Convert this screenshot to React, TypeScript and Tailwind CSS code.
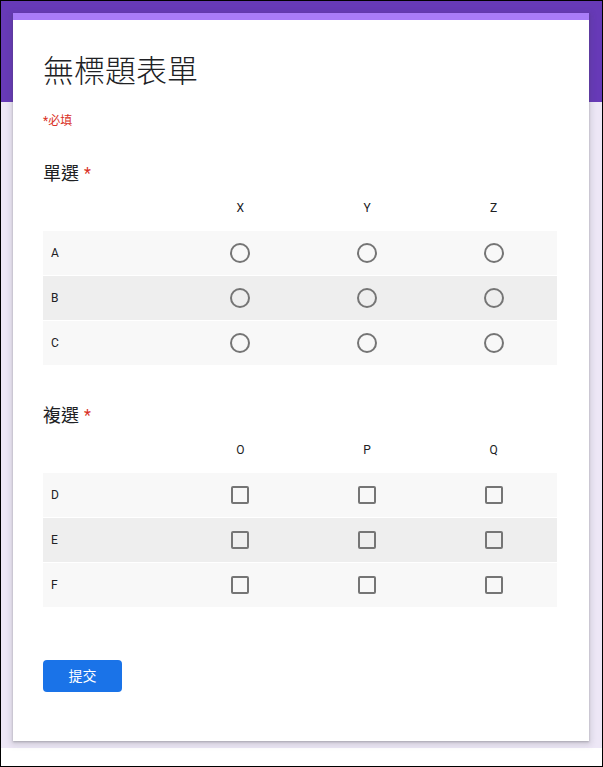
import React from 'react';

const FONT = { fontFamily: 'Roboto, "Noto Sans CJK TC", "Noto Sans", sans-serif' };

interface GridQuestion {
  title: string;
  kind: 'radio' | 'checkbox';
  columns: string[];
  rows: string[];
}

const questions: GridQuestion[] = [
  { title: '單選', kind: 'radio', columns: ['X', 'Y', 'Z'], rows: ['A', 'B', 'C'] },
  { title: '複選', kind: 'checkbox', columns: ['O', 'P', 'Q'], rows: ['D', 'E', 'F'] },
];

function Control({ kind }: { kind: GridQuestion['kind'] }) {
  if (kind === 'radio') {
    return <span className="block w-[20px] h-[20px] rounded-full border-2 border-[#757575]" />;
  }
  return <span className="block w-[18px] h-[18px] rounded-[2px] border-2 border-[#757575]" />;
}

function GridBlock({ q }: { q: GridQuestion }) {
  return (
    <div>
      <div className="h-[24px] leading-[24px] text-[18px] text-[#202124]">
        {q.title}
        <span className="text-[#d93025] text-[16px] align-top ml-[5px]">*</span>
      </div>
      <div className="flex flex-col gap-px">
        <div className="grid grid-cols-[134px_repeat(3,1fr)] h-[44px] items-center text-[12px] text-[#202124]">
          <span />
          {q.columns.map((c) => (
            <span key={c} className="text-center">{c}</span>
          ))}
        </div>
        {q.rows.map((r, i) => (
          <div
            key={r}
            className={`grid grid-cols-[134px_repeat(3,1fr)] h-[44px] items-center ${i === 1 ? 'bg-[#eeeeee]' : 'bg-[#f8f8f8]'}`}
          >
            <span className="pl-[8px] text-[12px] text-[#202124]">{r}</span>
            {q.columns.map((c) => (
              <span key={c} className="flex justify-center">
                <Control kind={q.kind} />
              </span>
            ))}
          </div>
        ))}
      </div>
    </div>
  );
}

export default function App() {
  return (
    <div style={FONT} className="h-[767px] border border-black bg-white overflow-hidden">
      <div className="bg-[linear-gradient(to_bottom,#673ab7_101px,#ede7f6_101px)] pt-[12px] pb-[7px] pl-[12px]">
        <div className="w-[576px] bg-white shadow-[0_1px_2px_rgba(60,64,67,0.3),0_2px_6px_2px_rgba(60,64,67,0.15)]">
          <div className="h-[7px] bg-[#a97cf8]" />
          <div className="pl-[30px] pr-[32px] pt-[33px] pb-[49px]">
            <h1 className="text-[31px] leading-[37px] font-light text-[#202124]">無標題表單</h1>
            <p className="mt-[23px] text-[12px] leading-[16px] text-[#d93025]">*必填</p>
            <div className="mt-[33px] flex flex-col gap-[39px]">
              {questions.map((q) => (
                <GridBlock key={q.title} q={q} />
              ))}
            </div>
            <button className="mt-[53px] w-[79px] h-[32px] rounded-[4px] bg-[#1a73e8] text-white text-[14px]">
              提交
            </button>
          </div>
        </div>
      </div>
    </div>
  );
}
